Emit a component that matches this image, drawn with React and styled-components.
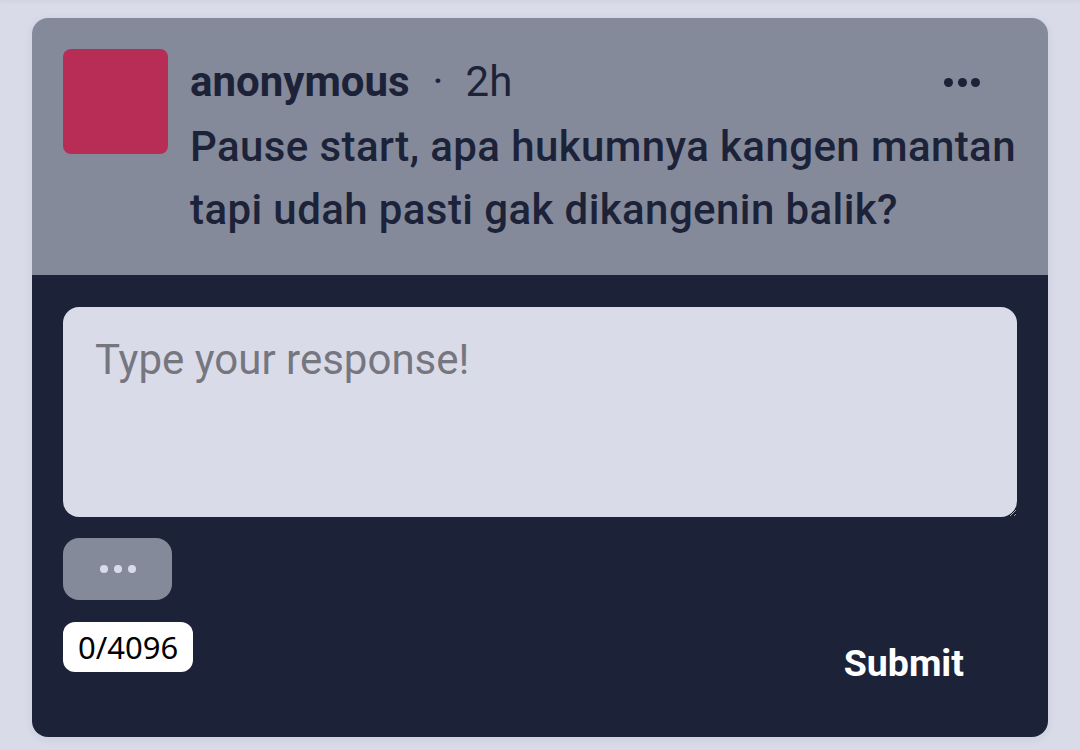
import React from "react";
import styled, { createGlobalStyle } from "styled-components";

const Global = createGlobalStyle`
  html, body { margin: 0; padding: 0; background: #d9dbe9; }
  body { font-family: Roboto, "Noto Sans", sans-serif; }
  * { box-sizing: border-box; }
`;

const Page = styled.div`
  min-height: 750px;
  padding: 18px 32px;
  background: #d9dbe9;
  box-shadow: inset 0 4px 4px -2px rgba(0, 0, 0, 0.04);
`;

const Card = styled.div`
  border-radius: 16px;
  overflow: hidden;
  box-shadow: 0 2px 10px rgba(28, 35, 57, 0.08);
`;

const Header = styled.div`
  display: flex;
  align-items: flex-start;
  gap: 22px;
  padding: 31px 31px 34px;
  background: #858a9b;
  color: #1c2339;
`;

const Avatar = styled.div`
  flex: none;
  width: 105px;
  height: 105px;
  border-radius: 8px;
  background: #b72d55;
`;

const Body = styled.div`
  flex: 1;
  min-width: 0;
`;

const Meta = styled.div`
  display: flex;
  align-items: center;
  font-size: 42px;
  line-height: 66px;
  white-space: nowrap;
`;

const Name = styled.span`
  font-weight: 700;
`;

const Dot = styled.span`
  margin: 0 22px 0 23px;
  font-weight: 400;
`;

const Time = styled.span`
  font-weight: 400;
`;

const Question = styled.p`
  margin: 0;
  font-size: 42px;
  font-weight: 500;
  line-height: 63px;
  letter-spacing: 0.4px;
`;

const MenuButton = styled.button`
  display: flex;
  align-items: center;
  gap: 4.5px;
  margin: 0 37px 0 auto;
  padding: 8px 0;
  border: 0;
  background: transparent;
  cursor: pointer;
`;

const MenuDot = styled.span`
  flex: none;
  width: ${(p) => p.size}px;
  height: ${(p) => p.size}px;
  border-radius: 50%;
  background: ${(p) => p.color};
`;

const Composer = styled.div`
  display: flex;
  flex-direction: column;
  padding: 32px 31px 31px;
  background: #1c2339;
`;

const Input = styled.textarea`
  display: block;
  width: 100%;
  height: 210px;
  margin: 0;
  padding: 21px 32px;
  border: 0;
  border-radius: 16px;
  outline: none;
  background: #d9dbe9;
  color: #1c2339;
  font-family: Roboto, sans-serif;
  font-size: 42px;
  line-height: 63px;
  resize: vertical;
  &::placeholder { color: #76767f; }
`;

const MoreButton = styled.button`
  display: flex;
  align-items: center;
  justify-content: center;
  gap: 6px;
  width: 109px;
  height: 62px;
  margin-top: 21px;
  padding: 0;
  border: 0;
  border-radius: 16px;
  background: #858a9b;
  cursor: pointer;
`;

const Footer = styled.div`
  display: flex;
  justify-content: space-between;
  align-items: flex-start;
  margin-top: 22px;
`;

const Counter = styled.span`
  display: inline-flex;
  align-items: center;
  height: 50px;
  padding: 0 15px;
  border-radius: 12px;
  background: #ffffff;
  color: #000000;
  font-family: "Noto Sans", "DejaVu Sans", sans-serif;
  font-size: 31px;
`;

const SubmitButton = styled.button`
  padding: 20px 53px 22px;
  border: 0;
  background: transparent;
  color: #ffffff;
  font-family: Roboto, sans-serif;
  font-size: 37.5px;
  font-weight: 700;
  line-height: 42px;
  cursor: pointer;
`;

const Dots = ({ size, color }) => (
  <>
    <MenuDot size={size} color={color} />
    <MenuDot size={size} color={color} />
    <MenuDot size={size} color={color} />
  </>
);

export default function App() {
  return (
    <>
      <Global />
      <Page>
        <Card>
          <Header>
            <Avatar />
            <Body>
              <Meta>
                <Name>anonymous</Name>
                <Dot>·</Dot>
                <Time>2h</Time>
                <MenuButton aria-label="More options">
                  <Dots size={9} color="#1c2339" />
                </MenuButton>
              </Meta>
              <Question>
                Pause start, apa hukumnya kangen mantan tapi udah pasti gak dikangenin balik?
              </Question>
            </Body>
          </Header>
          <Composer>
            <Input placeholder="Type your response!" />
            <MoreButton aria-label="More">
              <Dots size={8} color="#d9dbe9" />
            </MoreButton>
            <Footer>
              <Counter>0/4096</Counter>
              <SubmitButton>Submit</SubmitButton>
            </Footer>
          </Composer>
        </Card>
      </Page>
    </>
  );
}
